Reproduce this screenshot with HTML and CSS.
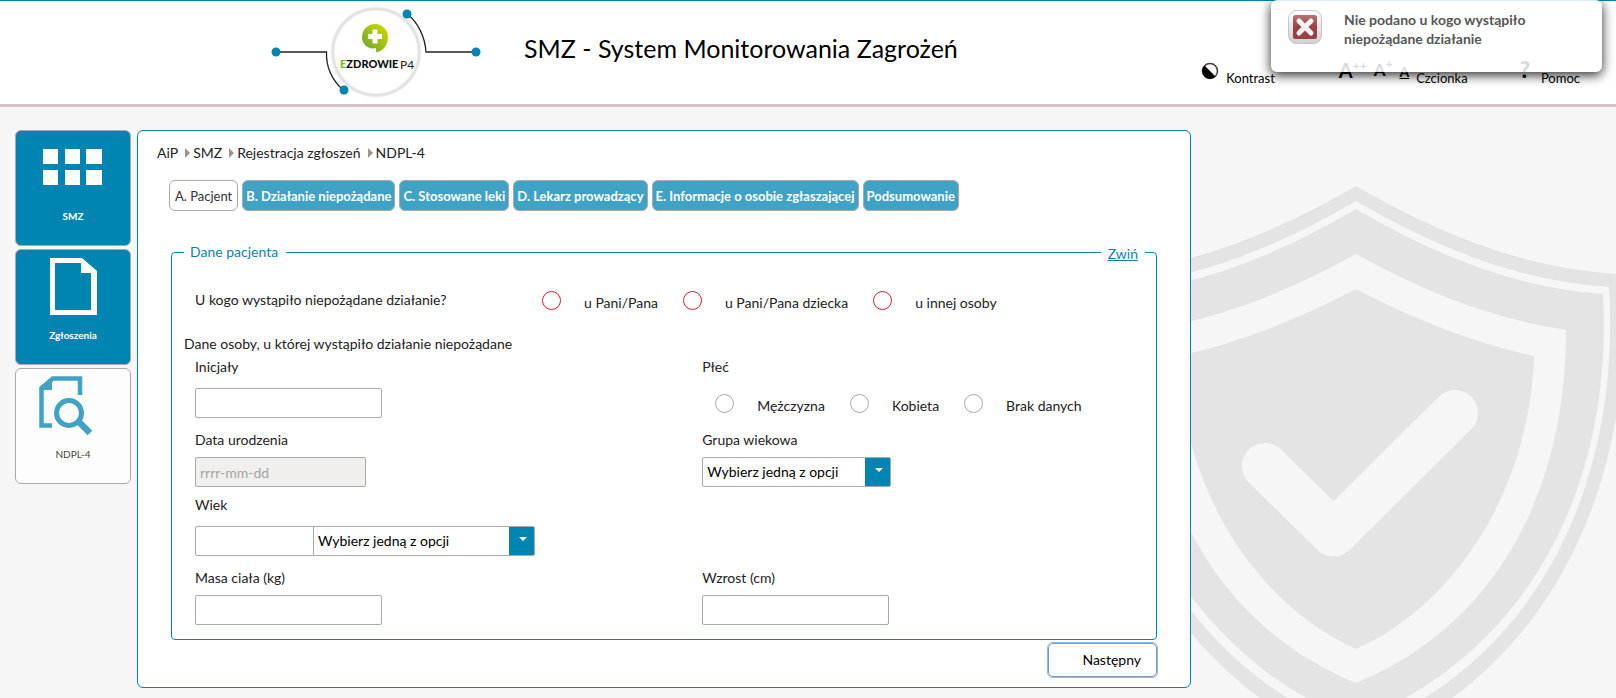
FILE: index.html
```html
<!DOCTYPE html>
<html lang="pl">
<head>
<meta charset="utf-8">
<title>SMZ - System Monitorowania Zagrożeń</title>
<link rel="stylesheet" href="styles.css">
</head>
<body>
<svg class="shield" viewBox="1180 107 436 591" width="436" height="591" aria-hidden="true">
  <g fill="#e4e4e4">
    <path d="M1356 186Q1500 270 1624 274C1636 500 1540 680 1356 750C1172 680 1076 500 1088 274Q1212 270 1356 186Z"/>
    <path fill="#f6f6f6" d="M1356 201Q1490 280 1609 287C1621 480 1540 662 1356 732C1172 662 1091 480 1103 287Q1222 280 1356 201Z"/>
    <path d="M1356 209Q1488 287 1603 294C1613 480 1534 650 1356 722C1178 650 1099 480 1109 294Q1224 287 1356 209Z"/>
    <path fill="#f6f6f6" d="M1356 254Q1465 315 1566 330C1566 500 1490 628 1356 683C1222 628 1146 500 1146 330Q1247 315 1356 254Z"/>
    <path d="M1356 289Q1450 338 1534 356C1530 490 1455 605 1356 649C1257 605 1182 490 1178 356Q1262 338 1356 289Z"/>
  </g>
  <path d="M1265 466L1333.5 533.5L1455 413" fill="none" stroke="#f6f6f6" stroke-width="46" stroke-linecap="round" stroke-linejoin="round"/>
</svg>

<header class="header">
  <svg class="logo" viewBox="270 1 212 100" width="212" height="100" role="img" aria-label="eZdrowie P4">
    <defs>
      <linearGradient id="leaf" x1="0" y1="1" x2="1" y2="0"><stop offset="0" stop-color="#5fa42a"/><stop offset="1" stop-color="#d9dc00"/></linearGradient>
      <radialGradient id="ring"><stop offset=".88" stop-color="#fff"/><stop offset=".94" stop-color="#dcdcdc"/><stop offset="1" stop-color="#fff"/></radialGradient>
    </defs>
    <path d="M276 52H326.5C326 66 331 79 343 90M476 52H426C425 37 418 22 407 14" fill="none" stroke="#222" stroke-width="1.3"/>
    <circle cx="376" cy="52" r="46" fill="url(#ring)"/>
    <g fill="#0085b2"><circle cx="276" cy="52" r="4.5"/><circle cx="476" cy="52" r="4.5"/><circle cx="344" cy="90" r="4.5"/><circle cx="407" cy="14" r="4.5"/></g>
    <path d="M375 24a13 13 0 0 1 13 13c0 8-5 15-12 15v-4c-7 2-14-3-14-11a13 13 0 0 1 13-13z" fill="url(#leaf)"/>
    <path d="M372.5 29.5h5v4.500h4.500v5h-4.500v4.500h-5v-4.500h-4.500v-5h4.500z" fill="#fff"/>
    <text class="logo-text" x="340" y="68"><tspan fill="#76b82a">E</tspan><tspan>ZDROWIE</tspan></text>
    <text class="logo-suffix" x="400" y="69">P4</text>
  </svg>
  <h1 class="title">SMZ - System Monitorowania Zagrożeń</h1>
  <nav class="tools" aria-label="Ułatwienia">
    <a class="tool" href="#kontrast">
      <svg viewBox="0 0 18 18" width="18" height="18" aria-hidden="true"><circle cx="9" cy="9" r="7.5" fill="#fff" stroke="#4a383c" stroke-width="1.5"/><path d="M3.5 3.5A7.5 7.5 0 0 0 14.5 14.5Z" fill="#000"/></svg>
      Kontrast</a>
    <a class="tool tool--font" href="#czcionka">
      <span class="size size--xl">A<sup>++</sup></span><span class="size size--l">A<sup>+</sup></span><span class="size size--s">A</span>
      Czcionka</a>
    <a class="tool tool--help" href="#pomoc"><span class="help">?</span>Pomoc</a>
  </nav>
</header>

<div class="layout">
  <nav class="side" aria-label="Moduły">
    <a class="tile" href="#smz">
      <svg viewBox="0 0 60 60" width="60" height="60" aria-hidden="true"><path fill="#fff" d="M0 10h15v15H0zM22 10h15v15H22zM43 10h16v15H43zM0 31h15v15H0zM22 31h15v15H22zM43 31h16v15H43z"/></svg>
      SMZ</a>
    <a class="tile" href="#zgloszenia">
      <svg viewBox="0 0 60 60" width="60" height="60" aria-hidden="true"><path fill="#fff" fill-rule="evenodd" d="M7 0H39L54 13V57H7ZM12 5V52H48V15H38V5Z"/></svg>
      Zgłoszenia</a>
    <a class="tile tile--active" href="#ndpl-4">
      <svg viewBox="0 0 60 60" width="60" height="60" aria-hidden="true"><g fill="none" stroke="#40a2c4"><path stroke-width="4.5" d="M9 48.5H-1.5V11L10 1.5H37V18"/><circle cx="26" cy="36" r="12.5" stroke-width="5"/><path stroke-width="6.5" d="M35 44L47 56"/></g><path fill="#40a2c4" d="M-3.5 12L9 -0.5V13H-3.5Z"/></svg>
      NDPL-4</a>
  </nav>

  <main class="panel">
    <nav class="crumbs" aria-label="Ścieżka"><a href="#aip">AiP</a><a href="#smz">SMZ</a><a href="#rejestracja">Rejestracja zgłoszeń</a><a href="#ndpl-4">NDPL-4</a></nav>
    <div class="tabs" role="tablist">
      <button class="tab tab--active" role="tab" aria-selected="true">A. Pacjent</button>
      <button class="tab" role="tab">B. Działanie niepożądane</button>
      <button class="tab" role="tab">C. Stosowane leki</button>
      <button class="tab" role="tab">D. Lekarz prowadzący</button>
      <button class="tab" role="tab">E. Informacje o osobie zgłaszającej</button>
      <button class="tab" role="tab">Podsumowanie</button>
    </div>

    <form>
      <fieldset class="box">
        <legend class="legend">Dane pacjenta</legend>
        <a class="collapse" href="#zwin">Zwiń</a>
        <div class="question" role="radiogroup" aria-labelledby="who">
          <span class="question-text" id="who">U kogo wystąpiło niepożądane działanie?</span>
          <div class="radios radios--error">
            <label class="radio"><input type="radio" name="who"><span>u Pani/Pana</span></label>
            <label class="radio"><input type="radio" name="who"><span>u Pani/Pana dziecka</span></label>
            <label class="radio"><input type="radio" name="who"><span>u innej osoby</span></label>
          </div>
        </div>
        <h2 class="subhead">Dane osoby, u której wystąpiło działanie niepożądane</h2>
        <div class="fields">
          <div class="field field--loose">
            <label for="initials">Inicjały</label>
            <input class="input" id="initials" type="text">
          </div>
          <div class="field field--loose" role="radiogroup" aria-labelledby="sex">
            <span id="sex">Płeć</span>
            <div class="radios radios--sex">
              <label class="radio"><input type="radio" name="sex"><span>Mężczyzna</span></label>
              <label class="radio"><input type="radio" name="sex"><span>Kobieta</span></label>
              <label class="radio"><input type="radio" name="sex"><span>Brak danych</span></label>
            </div>
          </div>
          <div class="field field--spaced">
            <label for="born">Data urodzenia</label>
            <input class="input input--date" id="born" type="text" placeholder="rrrr-mm-dd" disabled>
          </div>
          <div class="field field--spaced">
            <label for="group">Grupa wiekowa</label>
            <div class="select"><select id="group"><option>Wybierz jedną z opcji</option></select></div>
          </div>
          <div class="field field--loose field--row">
            <label for="age">Wiek</label>
            <div class="joined">
              <input class="input input--age" id="age" type="text">
              <div class="select select--unit"><select aria-label="Jednostka wieku"><option>Wybierz jedną z opcji</option></select></div>
            </div>
          </div>
          <div class="field field--spaced">
            <label for="mass">Masa ciała (kg)</label>
            <input class="input" id="mass" type="text">
          </div>
          <div class="field field--spaced">
            <label for="height">Wzrost (cm)</label>
            <input class="input" id="height" type="text">
          </div>
        </div>
      </fieldset>
      <div class="actions"><button class="next" type="button">Następny</button></div>
    </form>
  </main>
</div>

<div class="toast" role="alert">
  <svg viewBox="0 0 36 36" width="36" height="36" aria-hidden="true">
    <defs><linearGradient id="frame" x1="0" y1="0" x2="0" y2="1"><stop offset="0" stop-color="#fff"/><stop offset="1" stop-color="#c8c8c8"/></linearGradient><linearGradient id="red" x1="0" y1="0" x2="0" y2="1"><stop offset="0" stop-color="#b05a5d"/><stop offset=".5" stop-color="#8c1f24"/><stop offset="1" stop-color="#852025"/></linearGradient></defs>
    <rect x="1.5" y="1.5" width="33" height="33" rx="8" fill="url(#frame)" stroke="#bbb"/>
    <rect x="6" y="6" width="24" height="24" rx="2.5" fill="url(#red)"/>
    <path d="M12 12L24 24M24 12L12 24" stroke="#f2f2f2" stroke-width="5" stroke-linecap="round"/>
  </svg>
  <p>Nie podano u kogo wystąpiło niepożądane działanie</p>
</div>
</body>
</html>
```

FILE: styles.css
```css
* { box-sizing: border-box; }

body {
  margin: 0;
  position: relative;
  min-height: 100vh;
  background: #f6f6f6;
  color: #222;
  font: 14px/20px Lato, "Open Sans", sans-serif;
}

a { color: inherit; text-decoration: none; }
button, input, select { font: inherit; color: inherit; }

.shield { position: absolute; top: 107px; right: 0; z-index: -1; }

/* Header */
.header {
  display: flex;
  align-items: flex-start;
  height: 107px;
  padding: 0 36px 0 270px;
  border-top: 1px solid #0085b2;
  border-bottom: 3px solid #d3c5c7;
  background: #fff;
  color: #000;
}
.logo { flex: none; }
.logo-text { font: 900 11px Lato, sans-serif; fill: #111; }
.logo-suffix { font: 12px Lato, sans-serif; fill: #222; }
.title { margin: 31px 0 0 42px; font-size: 25px; font-weight: 400; line-height: 32px; white-space: nowrap; }
.tools { display: flex; align-items: flex-end; margin: 55px 0 0 auto; }
.tool { display: flex; align-items: flex-end; height: 32px; font-size: 13px; gap: 7px; }
.tool svg { margin-bottom: 8px; }
.tool--font { margin-left: 64px; }
.tool--help { margin-left: 52px; }
.size { font-weight: 700; line-height: 20px; color: #000; padding-bottom: 8px; }
.size sup { font-size: 12px; line-height: 8px; vertical-align: 8px; }
.size--xl { font-size: 20px; }
.size--l { font-size: 17px; }
.size--s { font-size: 14px; text-decoration: underline; padding-bottom: 6px; }
.help { font-size: 22px; font-weight: 900; padding: 0 4px 8px 0; }

/* Columns */
.layout { display: flex; gap: 6px; padding: 23px 425px 10px 15px; }
.side { flex: none; width: 116px; display: flex; flex-direction: column; gap: 3px; }
.tile {
  display: flex;
  flex-direction: column;
  align-items: center;
  height: 116px;
  padding-top: 8px;
  gap: 7px;
  border: 1px solid #a9a9a9;
  border-radius: 6px;
  background: #0085b2;
  color: #fff;
  font-size: 10px;
  font-weight: 700;
  line-height: 20px;
}
.tile svg { overflow: visible; }
.tile--active { background: #fdfdfd; color: #444; font-weight: 400; }
.panel {
  flex: 1;
  min-width: 0;
  padding: 12px 33px 10px;
  border: 1px solid #0085b2;
  border-radius: 6px;
  background: #fff;
}

.crumbs { display: flex; margin-left: -14px; }
.crumbs a { display: flex; align-items: center; }
.crumbs a + a::before {
  content: "";
  margin: 0 3px 0 7px;
  border-left: 5px solid #9c948e;
  border-top: 5px solid transparent;
  border-bottom: 5px solid transparent;
}

.tabs { display: flex; gap: 4px; margin: 17px 0 0 -2px; }
.tab {
  height: 31px;
  padding: 0 3px;
  border: 1px solid #a9a9a9;
  border-radius: 6px;
  background: #40a2c4;
  color: #fff;
  font-size: 13px;
  font-weight: 700;
  white-space: nowrap;
}
.tab--active { padding: 0 5px; background: #fff; color: #333; font-weight: 400; }

/* Form */
.box {
  position: relative;
  min-width: 0;
  margin: 31px 0 0;
  padding: 0 0 14px;
  border: 1px solid #0085b2;
  border-radius: 4px;
}
.legend { margin-left: 12px; padding: 0 8px 0 6px; color: #0d82ac; }
.collapse { position: absolute; top: -18px; right: 11px; padding: 0 7px; background: #fff; color: #0d82ac; text-decoration: underline; }
.question { display: flex; align-items: center; margin-top: 28px; padding-left: 23px; height: 20px; }
.question-text { width: 347px; }
.radios { display: flex; gap: 25px; }
.radio { display: flex; align-items: center; gap: 23px; }
.radio input {
  appearance: none;
  width: 19px;
  height: 19px;
  margin: 0;
  border: 1px solid #a9a9a9;
  border-radius: 50%;
  background: #fff;
}
.radio span { padding-top: 5px; }
.radios--error input { border-color: #cf1f2a; }
.radios--sex { height: 30px; padding-left: 13px; }

.subhead { margin: 24px 0 0 12px; font-size: inherit; font-weight: 400; }
.fields { display: grid; grid-template-columns: 19fr 17fr; row-gap: 8px; margin: 3px 0 0 23px; }
.field { display: flex; flex-direction: column; align-items: flex-start; gap: 7px; }
.field--loose { gap: 11px; }
.field--spaced { padding-top: 4px; }
.field--row { grid-column: 1 / -1; }
.input { width: 187px; height: 30px; padding: 1px 4px 0; border: 1px solid #a9a9a9; border-radius: 2px; background: #fff; }
.input--date { width: 171px; background: #f0efed; }
.input--date::placeholder { color: #a5a5a5; }
.input--age { width: 119px; border-radius: 2px 0 0 2px; }
.joined { display: flex; }
.select { position: relative; width: 189px; }
.select--unit { width: 222px; margin-left: -1px; }
.select select {
  appearance: none;
  display: block;
  width: 100%;
  height: 30px;
  padding: 0 30px 0 4px;
  border: 1px solid #a9a9a9;
  border-radius: 2px;
  background: linear-gradient(#0085b2, #0085b2) right / 25px 100% no-repeat #fff;
  color: #000;
}
.select::after {
  content: "";
  position: absolute;
  right: 8px;
  top: 11px;
  border-top: 4px solid #fff;
  border-left: 4px solid transparent;
  border-right: 4px solid transparent;
  pointer-events: none;
}

.actions { display: flex; justify-content: flex-end; margin-top: 3px; }
.next {
  height: 34px;
  padding: 0 15px 0 33px;
  border: 1px solid #8a97b5;
  border-radius: 5px;
  outline: 1px solid #8fb4f5;
  background: #fff;
  color: #000;
}

.toast {
  position: absolute;
  top: 0;
  right: 14px;
  width: 331px;
  height: 72px;
  display: flex;
  align-items: flex-start;
  gap: 21px;
  padding: 9px 60px 0 16px;
  border-radius: 6px;
  background: #fff;
  box-shadow: 0 3px 12px #000;
  color: #383838;
  opacity: .85;
  font-weight: 700;
  line-height: 19px;
}
.toast svg { flex: none; }
.toast p { margin: 0; padding-top: 1px; }
```
